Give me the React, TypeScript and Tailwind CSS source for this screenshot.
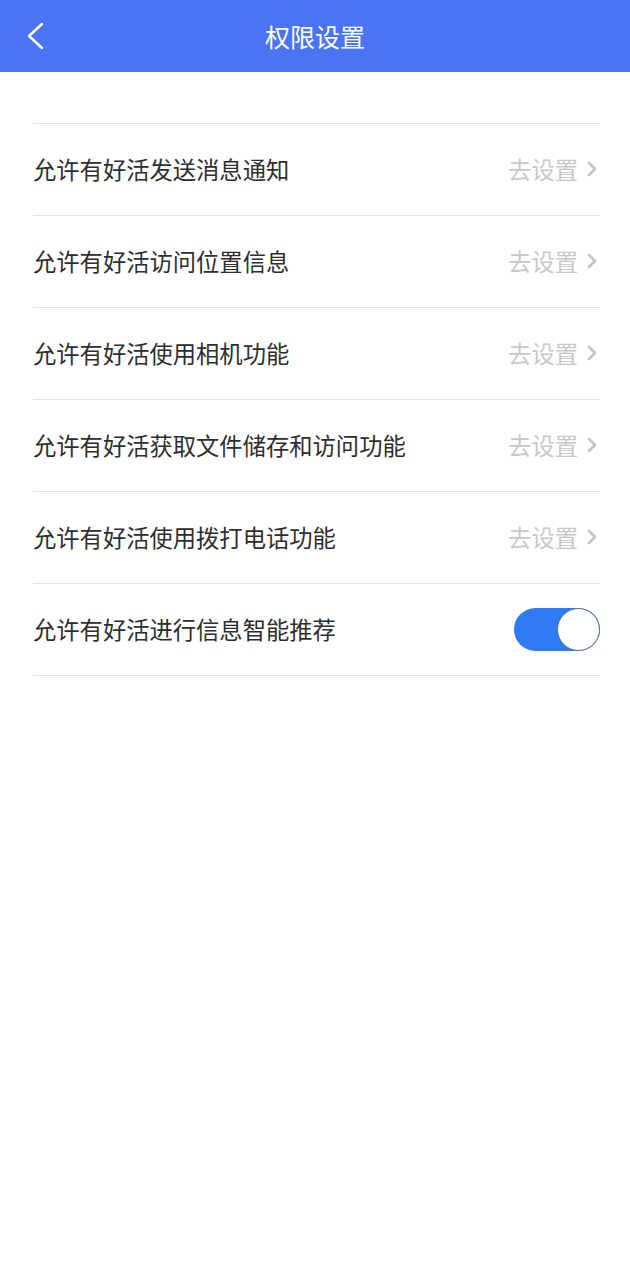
import React from "react";

const rows = [
  "允许有好活发送消息通知",
  "允许有好活访问位置信息",
  "允许有好活使用相机功能",
  "允许有好活获取文件储存和访问功能",
  "允许有好活使用拨打电话功能",
];

const font = { fontFamily: '"Noto Sans CJK SC", "Noto Sans", sans-serif' };

export default function App() {
  return (
    <div className="w-[630px] min-h-[1280px] bg-white" style={font}>
      <div className="relative h-[72px] bg-[#4b74f5] flex items-center justify-center">
        <svg className="absolute left-[24px] top-[21px]" width="22" height="30" viewBox="0 0 22 30">
          <path d="M18 3 L5 15 L18 27" fill="none" stroke="#fff" strokeWidth="2.4" strokeLinecap="round" strokeLinejoin="round" />
        </svg>
        <span className="text-white text-[25px] leading-none">权限设置</span>
      </div>
      <div className="pl-[33px] pr-[30px] pt-[51px]">
        <div className="border-t border-[#e2e2e2]" />
        {rows.map((r) => (
          <div key={r} className="h-[92px] flex items-center justify-between border-b border-[#e2e2e2]">
            <span className="text-[23.3px] text-[#2e2e2e] leading-none">{r}</span>
            <div className="flex items-center">
              <span className="text-[23.3px] text-[#c8c8c8] leading-none">去设置</span>
              <svg className="ml-[9px] mr-[3px]" width="10" height="16" viewBox="0 0 10 16">
                <path d="M2 2 L8 8 L2 14" fill="none" stroke="#c4c4c4" strokeWidth="2.6" strokeLinecap="round" strokeLinejoin="round" />
              </svg>
            </div>
          </div>
        ))}
        <div className="h-[92px] flex items-center justify-between border-b border-[#e2e2e2]">
          <span className="text-[23.3px] text-[#2e2e2e] leading-none">允许有好活进行信息智能推荐</span>
          <div className="relative w-[86px] h-[43px] rounded-full bg-[#2f7bf5]">
            <div className="absolute right-0 top-0 w-[43px] h-[43px] rounded-full bg-white border border-[#5a6f9a]" />
          </div>
        </div>
      </div>
    </div>
  );
}
